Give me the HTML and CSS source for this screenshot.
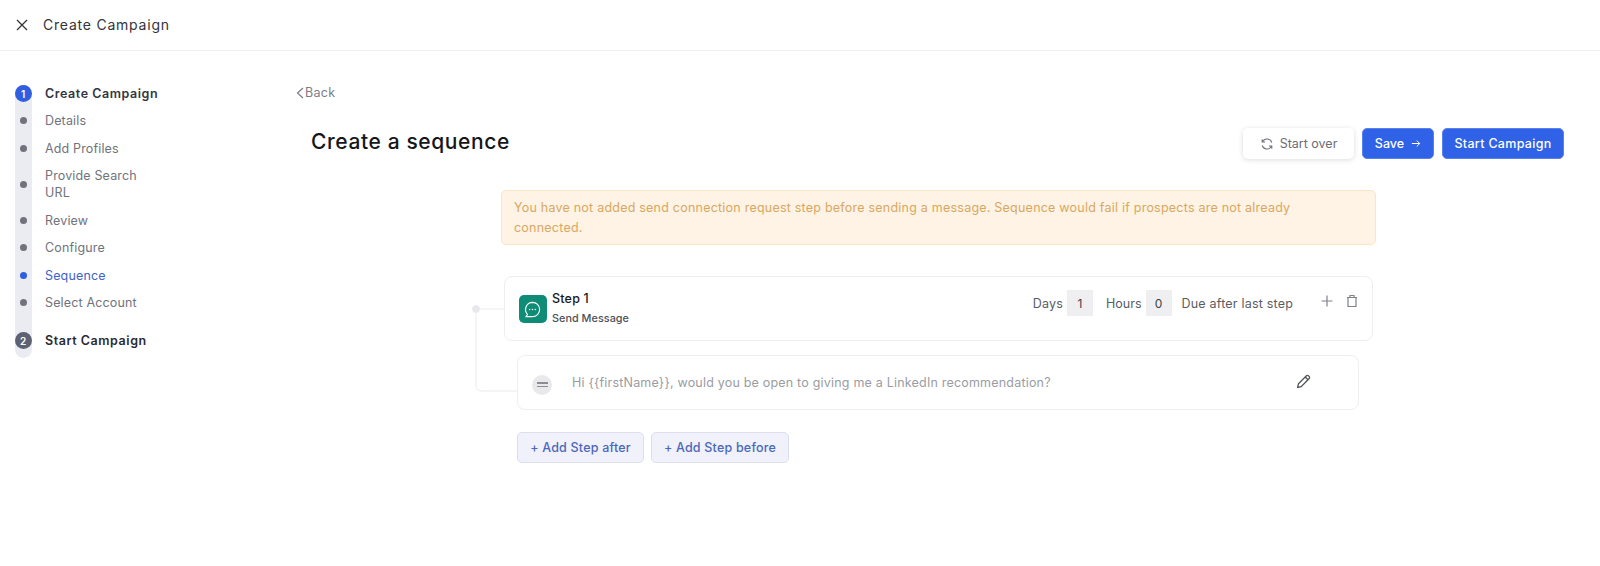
FILE: index.html
```html
<!DOCTYPE html>
<html lang="en">
<head>
<meta charset="utf-8">
<title>Create Campaign</title>
<link rel="stylesheet" href="styles.css">
</head>
<body>
<header class="topbar">
  <svg class="close-icon" viewBox="0 0 14 14" width="14" height="14"><path d="M2 2l10 10M12 2L2 12"/></svg>
  <span class="topbar-title">Create Campaign</span>
</header>
<div class="layout">
  <aside class="sidebar">
    <div class="rail"></div>
    <ol class="steps">
      <li class="step head"><span class="num active">1</span><span>Create Campaign</span></li>
      <li class="step sub"><span class="dot"></span><span>Details</span></li>
      <li class="step sub"><span class="dot"></span><span>Add Profiles</span></li>
      <li class="step sub tall"><span class="dot"></span><span>Provide Search<br>URL</span></li>
      <li class="step sub"><span class="dot"></span><span>Review</span></li>
      <li class="step sub"><span class="dot"></span><span>Configure</span></li>
      <li class="step sub current"><span class="dot"></span><span>Sequence</span></li>
      <li class="step sub"><span class="dot"></span><span>Select Account</span></li>
      <li class="step head last"><span class="num">2</span><span>Start Campaign</span></li>
    </ol>
  </aside>
  <main class="main">
    <a class="back"><svg viewBox="0 0 8 12" width="8" height="12"><path d="M7 1L1.5 6 7 11"/></svg>Back</a>
    <div class="title-row">
      <h1>Create a sequence</h1>
      <div class="actions">
        <button class="btn ghost"><svg viewBox="0 0 16 16" width="14" height="14"><path d="M13.5 6.5A5.7 5.7 0 0 0 3.4 4.6L2.5 5.8M2.5 2.5v3.3h3.3M2.5 9.5a5.7 5.7 0 0 0 10.1 1.9l.9-1.2M13.5 13.5v-3.3h-3.3"/></svg>Start over</button>
        <button class="btn primary">Save<svg viewBox="0 0 12 10" width="10" height="9"><path d="M1 5h9.5M7 1.5L10.5 5 7 8.5"/></svg></button>
        <button class="btn primary">Start Campaign</button>
      </div>
    </div>
    <section class="sequence">
      <div class="alert">You have not added send connection request step before sending a message. Sequence would fail if prospects are not already<br>connected.</div>
      <div class="flow">
        <svg class="connector" viewBox="0 0 50 100" width="50" height="100"><circle cx="5" cy="5" r="3.5"/><path d="M5 5h29M5 5v76q0 6 6 6h36"/></svg>
        <div class="step-card">
          <span class="step-icon"><svg viewBox="0 0 20 20" width="19" height="19"><path d="M10 2.5a7.5 7.5 0 0 1 0 15H3.2l1.5-2.4A7.5 7.5 0 0 1 10 2.5z"/><circle class="fill" cx="7" cy="10" r=".8"/><circle class="fill" cx="10" cy="10" r=".8"/><circle class="fill" cx="13" cy="10" r=".8"/></svg></span>
          <div class="step-text">
            <strong>Step 1</strong>
            <small>Send Message</small>
          </div>
          <div class="timing">
            <span>Days</span><span class="box">1</span>
            <span class="hours">Hours</span><span class="box">0</span>
            <span class="due">Due after last step</span>
          </div>
          <div class="tools">
            <svg viewBox="0 0 14 14" width="14" height="14"><path d="M7 1.5v11M1.5 7h11"/></svg>
            <svg viewBox="0 0 12 14" width="12" height="14"><path d="M2 3.5h8v9H2zM1 3.5h10M4 3.5V1.5h4v2"/></svg>
          </div>
        </div>
        <div class="message">
          <span class="drag"><i></i><i></i></span>
          <p>Hi {{firstName}}, would you be open to giving me a LinkedIn recommendation?</p>
          <svg class="edit" viewBox="0 0 16 16" width="17" height="17"><path d="M2.5 13.5l.7-3.3L10.8 2.6a1.3 1.3 0 0 1 1.8 0l.8.8a1.3 1.3 0 0 1 0 1.8l-7.6 7.6zM9.7 3.8l2.5 2.5"/></svg>
        </div>
        <div class="add-row">
          <button class="add">+ Add Step after</button>
          <button class="add">+ Add Step before</button>
        </div>
      </div>
    </section>
  </main>
</div>
</body>
</html>
```

FILE: styles.css
```css
* { box-sizing: border-box; }
html, body { margin: 0; height: 100%; }
body {
  background: #fff;
  color: #17181c;
  font-family: "Inter", "Open Sans", sans-serif;
  overflow: hidden;
}
svg { fill: none; stroke: currentColor; stroke-width: 1.2; flex: none; }

.topbar {
  height: 51px;
  display: flex;
  align-items: center;
  gap: 14px;
  padding: 0 15px;
  border-bottom: 1px solid #eeeff1;
}
.close-icon { color: #33353b; stroke-width: 1.3; }
.topbar-title { font-size: 14px; color: #33353b; letter-spacing: .78px; position: relative; top: -1px; }

.layout { display: flex; }

.sidebar { width: 296px; flex: none; padding: 34px 0 0 15px; position: relative; }
.rail {
  position: absolute;
  left: 15px; top: 34px;
  width: 17px; height: 273px;
  background: #eaecf2;
  border-radius: 9px;
}
.steps { list-style: none; margin: 0; padding: 0; position: relative; width: 140px; }
.step { display: flex; font-size: 12.5px; }
.head { font-weight: 600; color: #34363d; height: 17px; align-items: center; gap: 13px; letter-spacing: .55px; white-space: nowrap; }
.num {
  width: 17px; height: 17px;
  border-radius: 50%;
  background: #5d6172;
  color: #fff;
  font-size: 10px;
  display: flex; align-items: center; justify-content: center;
  flex: none;
}
.num.active { background: #2f5fe0; }
.sub { color: #71737c; gap: 18px; line-height: 17px; margin-top: 10.5px; padding-left: 5px; align-items: center; letter-spacing: .15px; }
.head + .sub { margin-top: 10px; }
.dot { width: 7px; height: 7px; border-radius: 50%; background: #71737c; flex: none; }
.current { color: #3f63c8; }
.current .dot { background: #2f5fe0; }
.last { margin-top: 21px; color: #2a2c33; }

.main { flex: 1; padding: 33px 36px 0 0; }
.back {
  display: flex; align-items: center; gap: 1px;
  color: #7b7d85; font-size: 12.5px; letter-spacing: .3px;
  height: 17px;
}
.title-row { display: flex; justify-content: space-between; align-items: flex-start; margin-top: 28px; padding-left: 15px; }
h1 { margin: 0; font-size: 21px; font-weight: 500; color: #15161a; line-height: 24px; letter-spacing: .6px; position: relative; top: 1px; }
.actions { display: flex; gap: 8px; margin-top: -1px; }
.btn {
  height: 31px;
  border-radius: 5px;
  font: 500 12.5px "Inter", sans-serif;
  display: flex; align-items: center; justify-content: center;
  border: 0;
}
.ghost { width: 111px; background: #fff; color: #6b6d75; gap: 6px; box-shadow: 0 1px 5px rgba(40,45,60,.16); font-weight: 400; }
.primary { background: #2f62e6; color: #fff; border: 1px solid #5a82ec; }
.primary:nth-child(2) { width: 72px; gap: 7px; }
.primary:nth-child(3) { width: 122px; letter-spacing: .3px; }

.sequence { padding-left: 205px; margin-top: 31px; margin-right: -1px; }
.alert {
  width: 875px; height: 55px;
  background: #fef3e4;
  border: 1px solid #fbe6c3;
  border-radius: 5px;
  color: #d9a762;
  font-size: 12.5px;
  line-height: 20px;
  padding: 7px 12px;
  letter-spacing: .225px;
}
.flow { position: relative; padding-top: 31px; }
.connector { position: absolute; left: -30px; top: 59px; color: #eaebee; stroke-width: 1; }
.connector circle { fill: #e6e7ea; }
.step-card {
  width: 869px; height: 65px;
  margin-left: 3px;
  border: 1px solid #edeef1;
  border-radius: 8px;
  background: #fff;
  display: flex;
  align-items: flex-start;
  padding: 18px 14px 0 13.5px;
  position: relative;
}
.step-icon {
  width: 28px; height: 28px;
  background: #0f8c76;
  border-radius: 5px;
  color: #fff;
  display: flex; align-items: center; justify-content: center;
}
.step-icon .fill { fill: #fff; stroke: none; }
.step-text { margin-left: 5.5px; display: flex; flex-direction: column; margin-top: -5px; }
.step-text strong { font-size: 12.5px; font-weight: 500; line-height: 17px; letter-spacing: .2px; }
.step-text small { font-size: 10.8px; color: #4e5058; line-height: 17px; margin-top: 3px; letter-spacing: .05px; font-weight: 500; }
.timing {
  margin-left: auto;
  display: flex; align-items: center;
  font-size: 12.5px; color: #5a5c64;
  margin-top: -5px;
  letter-spacing: .2px;
}
.box {
  width: 26px; height: 26px;
  background: #efeff1;
  color: #3d3f46;
  display: flex; align-items: center; justify-content: center;
  margin-left: 4px;
  font-size: 12px;
}
.hours { margin-left: 13px; letter-spacing: 0; }
.due { margin-left: 10px; }
.tools { display: flex; align-items: center; gap: 12px; margin-left: 27px; color: #80828a; margin-top: -1px; }
.message {
  width: 842px; height: 55px;
  margin: 14px 0 0 16px;
  border: 1px solid #edeef1;
  border-radius: 8px;
  background: #fff;
  display: flex; align-items: center;
  padding: 0 0 0 14px;
  position: relative;
}
.drag {
  width: 20px; height: 20px;
  border-radius: 50%;
  background: #e9e9ec;
  display: flex; flex-direction: column; align-items: center; justify-content: center; gap: 2px;
  flex: none;
  margin-top: 4px;
}
.drag i { width: 11px; height: 1.5px; background: #8b8d94; display: block; }
.message p { margin: -1px 0 0 20px; font-size: 12.5px; color: #9a9ca3; letter-spacing: .2px; width: 723px; flex: none; }
.edit { color: #4f5158; margin-top: -2px; }
.add-row { display: flex; gap: 7px; margin: 22px 0 0 16px; }
.add {
  height: 31px;
  background: #f0f1fb;
  border: 1px solid #dcdeee;
  border-radius: 5px;
  color: #4b67b8;
  font: 500 12.5px "Inter", sans-serif;
  letter-spacing: .2px;
  padding: 0;
}
.add:first-child { width: 127px; }
.add:last-child { width: 138px; }
```
